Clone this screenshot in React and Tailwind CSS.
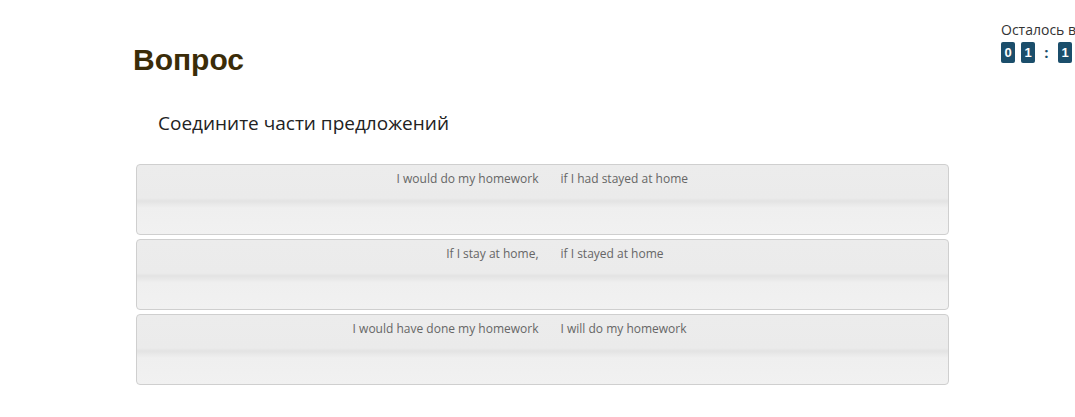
import React from 'react';

const pairs = [
  ['I would do my homework', 'if I had stayed at home'],
  ['If I stay at home,', 'if I stayed at home'],
  ['I would have done my homework', 'I will do my homework'],
];

function Timer() {
  const digits = ['0', '1', ':', '1'];
  return (
    <div className="absolute left-[1001px] top-[21px] whitespace-nowrap font-['Open_Sans',sans-serif] text-[#333]">
      <div className="text-[14px] leading-[18px]">Осталось времени</div>
      <div className="mt-[2px] flex items-center gap-[6px]">
        {digits.map((d, i) =>
          d === ':' ? (
            <span key={i} className="w-[11px] text-center text-[15px] font-bold text-[#1b4e6b]">:</span>
          ) : (
            <span
              key={i}
              className="flex h-[21px] w-[14px] items-center justify-center rounded-[2px] bg-[#1b4e6b] font-['Liberation_Sans',sans-serif] text-[13px] font-semibold text-white"
            >
              {d}
            </span>
          )
        )}
      </div>
    </div>
  );
}

export default function App() {
  return (
    <div className="relative h-[417px] w-[1075px] overflow-hidden bg-white">
      <Timer />
      <div className="ml-[136px] w-[813px] pt-[42px]">
        <h1 className="ml-[-3px] font-['Liberation_Sans',Arial,sans-serif] text-[30px] font-bold leading-[36px] text-[#3b2c08]">
          Вопрос
        </h1>
        <p className="ml-[22px] mt-[33px] font-['Open_Sans',sans-serif] text-[19px] leading-[24px] text-[#222]">
          Соедините части предложений
        </p>
        <div className="mt-[29px] flex flex-col gap-[4px]">
          {pairs.map(([left, right], i) => (
            <div
              key={i}
              className="flex h-[71px] rounded-[4px] border border-[#cfcfcf] bg-[linear-gradient(to_bottom,#ececec_0%,#ebebeb_48%,#e3e3e3_52%,#efefef_62%,#f1f1f1_100%)] font-['Open_Sans',sans-serif] text-[12px] leading-[16px] text-[#666]"
            >
              <div className="w-1/2 pr-[4px] pt-[6px] text-right">{left}</div>
              <div className="w-1/2 pl-[18px] pt-[6px]">{right}</div>
            </div>
          ))}
        </div>
      </div>
    </div>
  );
}
